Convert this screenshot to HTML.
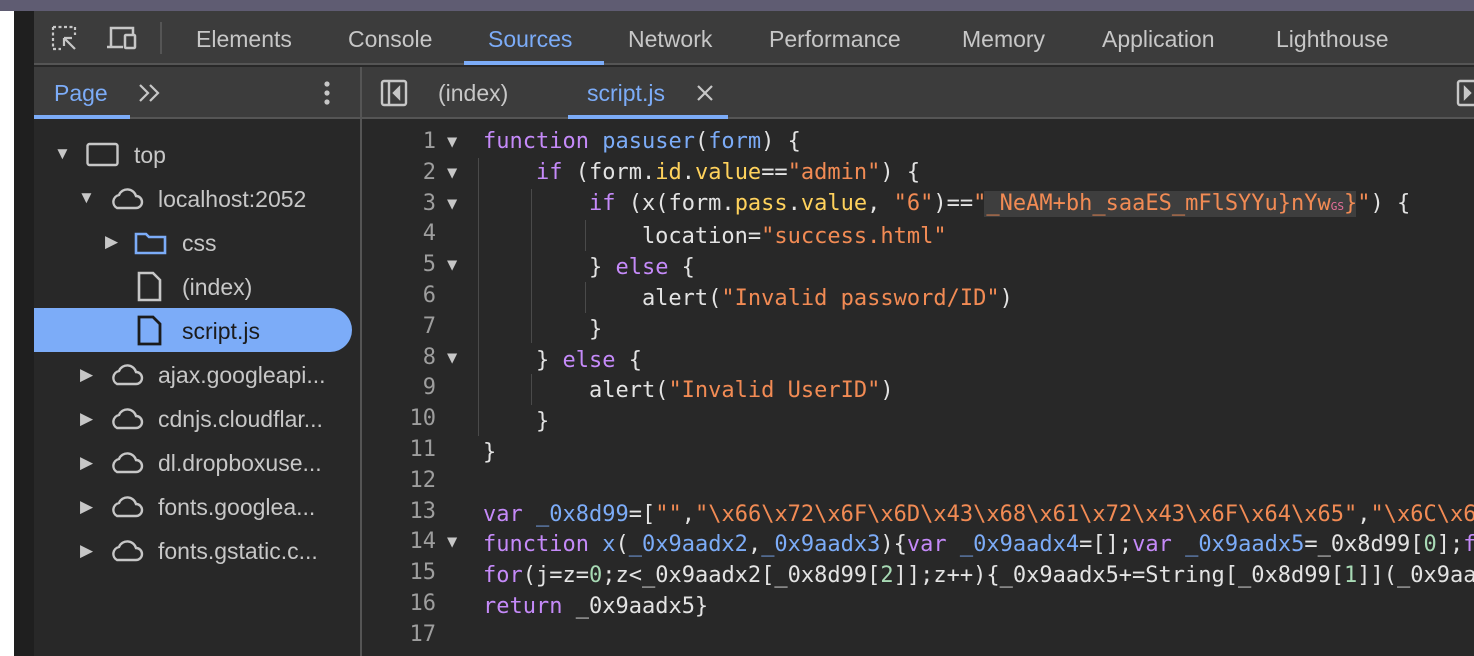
<!DOCTYPE html>
<html><head><meta charset="utf-8"><style>
*{margin:0;padding:0;box-sizing:border-box}
body{width:1474px;height:656px;overflow:hidden;background:#282828;position:relative;font-family:"Liberation Sans",sans-serif;color:#e3e3e3}
.a{position:absolute}
.ui{font-size:23px;color:#c7c7c7;white-space:nowrap}
.code{font-family:"DejaVu Sans Mono","Liberation Mono",monospace;font-size:22px;white-space:pre;color:#e3e3e3;line-height:30.8px}
.k{color:#c58af9}.f{color:#7cacf8}.s{color:#f28b54}.p{color:#ffd25c}.n{color:#a8dab5}
.ln{width:60px;text-align:right;color:#9e9e9e}
.tri{color:#c7c7c7;font-size:17px}
.g{width:1px;background:#4a4a4a}
</style></head><body>
<div class="a" style="left:0;top:0;width:1474px;height:11px;background:#5f5c72"></div>
<div class="a" style="left:0;top:11px;width:14px;height:645px;background:#fff"></div>
<div class="a" style="left:14px;top:11px;width:20px;height:645px;background:#1f1f1f"></div>
<div class="a" style="left:34px;top:11px;width:1440px;height:54px;background:#3c3c3c;border-bottom:2px solid #555"></div>
<svg class="a" style="left:50px;top:24px" width="34" height="30" viewBox="0 0 34 30" fill="none" stroke="#c7c7c7" stroke-width="2.2"><path d="M3 3h22v8" stroke-dasharray="3 2.5"/><path d="M3 3v22h8" stroke-dasharray="3 2.5"/><path d="M14 14l11 11M14 14h8M14 14v8"/></svg>
<svg class="a" style="left:105px;top:24px" width="36" height="30" viewBox="0 0 36 30" fill="none" stroke="#c7c7c7" stroke-width="2.5"><path d="M6 22V4h22v6"/><path d="M2 23h16"/><rect x="20" y="11" width="10" height="13" rx="1"/></svg>
<div class="a" style="left:160px;top:22px;width:2px;height:32px;background:#555"></div>
<div class="a ui" style="left:196px;top:26px">Elements</div>
<div class="a ui" style="left:348px;top:26px">Console</div>
<div class="a ui" style="left:488px;top:26px;color:#7cacf8">Sources</div>
<div class="a" style="left:464px;top:61px;width:140px;height:4px;background:#7cacf8"></div>
<div class="a ui" style="left:628px;top:26px">Network</div>
<div class="a ui" style="left:769px;top:26px">Performance</div>
<div class="a ui" style="left:962px;top:26px">Memory</div>
<div class="a ui" style="left:1102px;top:26px">Application</div>
<div class="a ui" style="left:1276px;top:26px">Lighthouse</div>
<div class="a" style="left:34px;top:67px;width:1440px;height:52px;background:#3c3c3c;border-bottom:2px solid #555"></div>
<div class="a ui" style="left:54px;top:80px;color:#7cacf8">Page</div>
<div class="a" style="left:34px;top:115px;width:96px;height:4px;background:#7cacf8"></div>
<svg class="a" style="left:138px;top:83px" width="26" height="20" fill="none" stroke="#c7c7c7" stroke-width="2.2"><path d="M2 2l8 8-8 8M12 2l8 8-8 8"/></svg>
<svg class="a" style="left:320px;top:80px" width="14" height="26"><circle cx="7" cy="4" r="2.6" fill="#c7c7c7"/><circle cx="7" cy="13" r="2.6" fill="#c7c7c7"/><circle cx="7" cy="22" r="2.6" fill="#c7c7c7"/></svg>
<div class="a" style="left:360px;top:67px;width:2px;height:589px;background:#555"></div>
<svg class="a" style="left:380px;top:79px" width="28" height="28" fill="none" stroke="#c7c7c7" stroke-width="2.4"><rect x="2" y="2" width="24" height="24" rx="2"/><path d="M9 2v24"/><path d="M19 9l-5 5 5 5z" fill="#c7c7c7"/></svg>
<div class="a ui" style="left:438px;top:80px">(index)</div>
<div class="a ui" style="left:587px;top:80px;color:#7cacf8">script.js</div>
<svg class="a" style="left:696px;top:84px" width="18" height="18" stroke="#c7c7c7" stroke-width="2.2"><path d="M2 2l14 14M16 2L2 16"/></svg>
<div class="a" style="left:568px;top:115px;width:160px;height:4px;background:#7cacf8"></div>
<svg class="a" style="left:1456px;top:79px" width="28" height="28" fill="none" stroke="#c7c7c7" stroke-width="2.4"><rect x="2" y="2" width="24" height="24" rx="2"/><path d="M9 9l5 5-5 5z" fill="#c7c7c7"/></svg>
<div class="a" style="left:34px;top:308px;width:318px;height:44px;background:#7cacf8;border-radius:0 22px 22px 0"></div>
<div class="a tri" style="left:54px;top:144px">&#9660;</div>
<svg class="a" style="left:86px;top:142px" width="34" height="26" fill="none" stroke="#c7c7c7" stroke-width="2.4"><rect x="1.5" y="2" width="30" height="21" rx="2"/></svg>
<div class="a ui" style="left:134px;top:142px">top</div>
<div class="a tri" style="left:78px;top:188px">&#9660;</div>
<svg class="a" style="left:108px;top:186px" width="36" height="26" fill="none" stroke="#c7c7c7" stroke-width="2.4"><path d="M9 22h19a6 6 0 0 0 0-12 9 9 0 0 0-17-1 7 7 0 0 0-2 13z"/></svg>
<div class="a ui" style="left:158px;top:186px">localhost:2052</div>
<div class="a tri" style="left:105px;top:232px">&#9654;</div>
<svg class="a" style="left:134px;top:230px" width="34" height="26" fill="none" stroke="#7cacf8" stroke-width="2.6"><path d="M2 4h10l3 3h16v16H2z"/></svg>
<div class="a ui" style="left:182px;top:230px">css</div>
<svg class="a" style="left:137px;top:271px" width="26" height="32" fill="none" stroke="#c7c7c7" stroke-width="2.6"><path d="M2 2h14l7 7v20H2z"/></svg>
<div class="a ui" style="left:182px;top:274px">(index)</div>
<svg class="a" style="left:137px;top:315px" width="26" height="32" fill="none" stroke="#1b1b1b" stroke-width="2.8"><path d="M2 2h14l7 7v20H2z"/></svg>
<div class="a ui" style="left:182px;top:318px;color:#1b1b1b">script.js</div>
<div class="a tri" style="left:80px;top:365px">&#9654;</div>
<svg class="a" style="left:108px;top:362px" width="36" height="26" fill="none" stroke="#c7c7c7" stroke-width="2.4"><path d="M9 22h19a6 6 0 0 0 0-12 9 9 0 0 0-17-1 7 7 0 0 0-2 13z"/></svg>
<div class="a ui" style="left:158px;top:362px">ajax.googleapi...</div>
<div class="a tri" style="left:80px;top:409px">&#9654;</div>
<svg class="a" style="left:108px;top:406px" width="36" height="26" fill="none" stroke="#c7c7c7" stroke-width="2.4"><path d="M9 22h19a6 6 0 0 0 0-12 9 9 0 0 0-17-1 7 7 0 0 0-2 13z"/></svg>
<div class="a ui" style="left:158px;top:406px">cdnjs.cloudflar...</div>
<div class="a tri" style="left:80px;top:453px">&#9654;</div>
<svg class="a" style="left:108px;top:450px" width="36" height="26" fill="none" stroke="#c7c7c7" stroke-width="2.4"><path d="M9 22h19a6 6 0 0 0 0-12 9 9 0 0 0-17-1 7 7 0 0 0-2 13z"/></svg>
<div class="a ui" style="left:158px;top:450px">dl.dropboxuse...</div>
<div class="a tri" style="left:80px;top:497px">&#9654;</div>
<svg class="a" style="left:108px;top:494px" width="36" height="26" fill="none" stroke="#c7c7c7" stroke-width="2.4"><path d="M9 22h19a6 6 0 0 0 0-12 9 9 0 0 0-17-1 7 7 0 0 0-2 13z"/></svg>
<div class="a ui" style="left:158px;top:494px">fonts.googlea...</div>
<div class="a tri" style="left:80px;top:541px">&#9654;</div>
<svg class="a" style="left:108px;top:538px" width="36" height="26" fill="none" stroke="#c7c7c7" stroke-width="2.4"><path d="M9 22h19a6 6 0 0 0 0-12 9 9 0 0 0-17-1 7 7 0 0 0-2 13z"/></svg>
<div class="a ui" style="left:158px;top:538px">fonts.gstatic.c...</div>
<div class="a g" style="left:478px;top:158px;height:278px"></div>
<div class="a g" style="left:531px;top:189px;height:154px"></div>
<div class="a g" style="left:531px;top:374px;height:31px"></div>
<div class="a g" style="left:585px;top:220px;height:31px"></div>
<div class="a g" style="left:585px;top:282px;height:31px"></div>
<div class="a" style="left:984px;top:191px;width:372px;height:26px;background:#3e3e3e"></div>
<div class="a code ln" style="left:376px;top:127px">1
2
3
4
5
6
7
8
9
10
11
12
13
14
15
16
17</div>
<div class="a code tri" style="left:447px;top:127px;font-size:17px;line-height:30.8px">&#9660;
&#9660;
&#9660;

&#9660;


&#9660;





&#9660;</div>
<div class="a code" style="left:483px;top:127px"><span class="k">function</span> <span class="f">pasuser</span>(<span class="f">form</span>) {
    <span class="k">if</span> (form.<span class="p">id</span>.<span class="p">value</span>==<span class="s">"admin"</span>) {
        <span class="k">if</span> (x(form.<span class="p">pass</span>.<span class="p">value</span>, <span class="s">"6"</span>)==<span class="s">"_NeAM+bh_saaES_mFlSYYu}nYw<span style="font-size:11px;color:#e8709a">GS</span>}"</span>) {
            location=<span class="s">"success.html"</span>
        } <span class="k">else</span> {
            alert(<span class="s">"Invalid password/ID"</span>)
        }
    } <span class="k">else</span> {
        alert(<span class="s">"Invalid UserID"</span>)
    }
}

<span class="k">var</span> <span class="f">_0x8d99</span>=[<span class="s">""</span>,<span class="s">"\x66\x72\x6F\x6D\x43\x68\x61\x72\x43\x6F\x64\x65"</span>,<span class="s">"\x6C\x6</span>
<span class="k">function</span> <span class="f">x</span>(<span class="f">_0x9aadx2</span>,<span class="f">_0x9aadx3</span>){<span class="k">var</span> <span class="f">_0x9aadx4</span>=[];<span class="k">var</span> <span class="f">_0x9aadx5</span>=_0x8d99[<span class="n">0</span>];<span class="k">f</span>
<span class="k">for</span>(j=z=<span class="n">0</span>;z&lt;_0x9aadx2[_0x8d99[<span class="n">2</span>]];z++){_0x9aadx5+=String[_0x8d99[<span class="n">1</span>]](_0x9aa
<span class="k">return</span> _0x9aadx5}
</div>
</body></html>
